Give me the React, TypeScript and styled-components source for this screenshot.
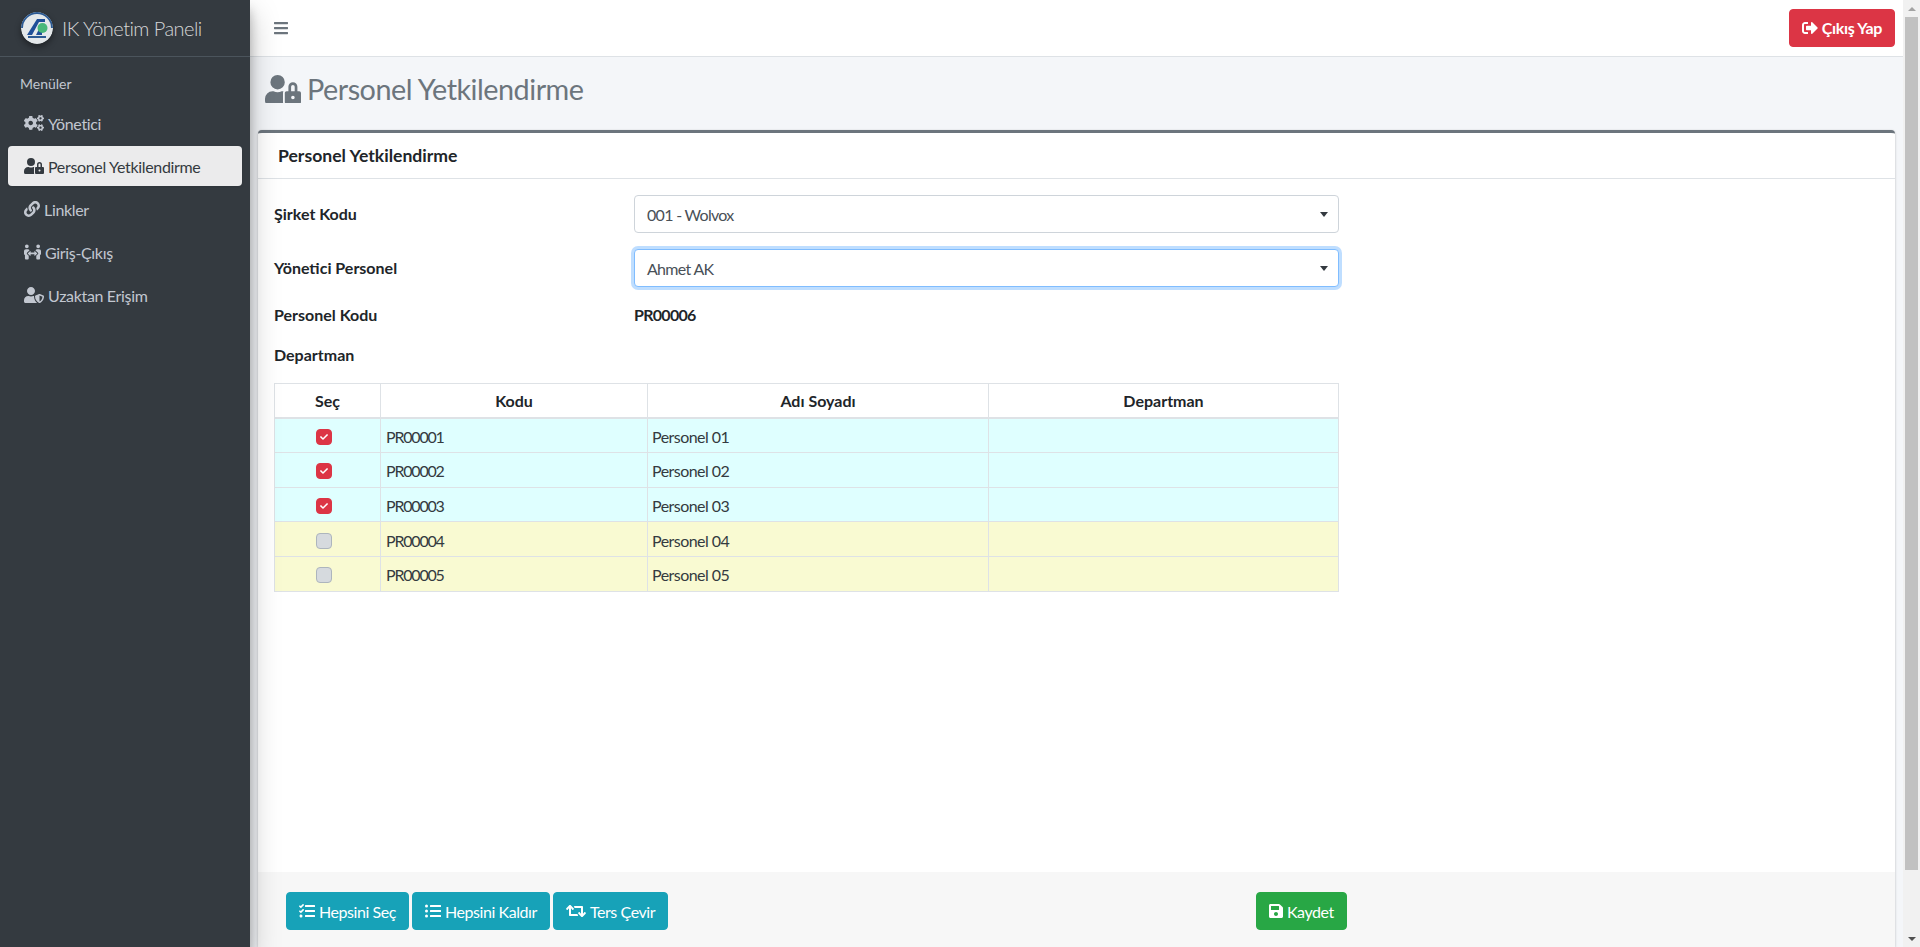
import React from 'react';
import styled, { createGlobalStyle } from 'styled-components';
import {
  FaBars,
  FaCheck,
  FaCogs,
  FaLink,
  FaListUl,
  FaPeopleArrows,
  FaRetweet,
  FaSave,
  FaSignOutAlt,
  FaTasks,
  FaUserLock,
  FaUserShield,
} from 'react-icons/fa';

const GlobalStyle = createGlobalStyle`
  html, body {
    margin: 0;
    height: 100%;
    overflow: hidden;
  }
  body {
    font-family: Lato, "Noto Sans", sans-serif;
    font-size: 16px;
    color: #212529;
  }
  * {
    box-sizing: border-box;
  }
`;

// react-icons renders every glyph in a 1em square, the FA viewBoxes are wider
const CogsIcon = styled(FaCogs)`
  width: 1.25em;
`;
const UserLockIcon = styled(FaUserLock)`
  width: 1.25em;
`;
const PeopleArrowsIcon = styled(FaPeopleArrows)`
  width: 1.0625em;
`;
const UserShieldIcon = styled(FaUserShield)`
  width: 1.25em;
`;
const RetweetIcon = styled(FaRetweet)`
  width: 1.25em;
`;
const SaveIcon = styled(FaSave)`
  width: 0.875em;
`;
const BarsIcon = styled(FaBars)`
  width: 0.875em;
`;

const Page = styled.div`
  width: 1920px;
  height: 947px;
  display: flex;
  overflow: hidden;
  background: #f4f6f9;
`;

const Sidebar = styled.aside`
  width: 250px;
  flex: none;
  background: #343a40;
  box-shadow: 0 14px 28px rgba(0, 0, 0, 0.25), 0 10px 10px rgba(0, 0, 0, 0.22);
  position: relative;
  z-index: 2;
`;

const Brand = styled.div`
  height: 57px;
  display: flex;
  align-items: center;
  gap: 9px;
  padding-left: 21px;
  border-bottom: 1px solid #4b545c;
  color: rgba(255, 255, 255, 0.8);
  font-size: 20px;
  font-weight: 300;
  letter-spacing: -0.55px;
`;

const LogoMark = styled.svg`
  width: 32px;
  height: 32px;
  border-radius: 50%;
  box-shadow: 0 3px 6px rgba(0, 0, 0, 0.4);
`;

const MenuHeader = styled.div`
  color: #c2c7d0;
  font-size: 14px;
  padding: 17px 0 0 20px;
  height: 44px;
  line-height: 16px;
  margin-top: 2px;
`;

const Menu = styled.nav`
  display: flex;
  flex-direction: column;
  gap: 3px;
  padding: 0 8px;
`;

const MenuItem = styled.a<{ $active?: boolean }>`
  height: 40px;
  display: flex;
  align-items: center;
  gap: 4px;
  padding-left: 16px;
  border-radius: 4px;
  font-size: 16px;
  letter-spacing: -0.33px;
  color: ${(p) => (p.$active ? '#343a40' : '#c2c7d0')};
  background: ${(p) => (p.$active ? 'rgba(255, 255, 255, 0.9)' : 'transparent')};
  box-shadow: ${(p) => (p.$active ? '0 1px 3px rgba(0, 0, 0, 0.12)' : 'none')};
  svg {
    flex: none;
  }
`;

const Main = styled.div`
  flex: 1;
  min-width: 0;
  display: flex;
  flex-direction: column;
`;

const Navbar = styled.header`
  height: 57px;
  flex: none;
  display: flex;
  align-items: center;
  justify-content: space-between;
  padding: 0 8px 1px 24px;
  background: #fff;
  border-bottom: 1px solid #dee2e6;
`;

const MenuToggle = styled.span`
  color: #6c757d;
  display: flex;
  font-size: 16px;
`;

const Button = styled.button<{ $color: string; $bold?: boolean }>`
  height: 38px;
  display: inline-flex;
  align-items: center;
  gap: 4px;
  padding: 0 12px;
  border: 1px solid ${(p) => p.$color};
  border-radius: 4px;
  background: ${(p) => p.$color};
  color: #fff;
  font-family: inherit;
  font-size: 16px;
  font-weight: ${(p) => (p.$bold ? 700 : 400)};
  letter-spacing: ${(p) => (p.$bold ? '-0.35px' : '-0.43px')};
  white-space: nowrap;
`;

const ContentHeader = styled.div`
  height: 73px;
  flex: none;
  display: flex;
  align-items: center;
  gap: 6px;
  padding: 0 0 9px 15px;
  color: #6c757d;
  font-size: 28.8px;
  font-weight: 400;
  line-height: 1;
  letter-spacing: -0.5px;
`;

const Card = styled.section`
  flex: 1;
  min-height: 0;
  margin: 0 8px;
  display: flex;
  flex-direction: column;
  background: #fff;
  border-top: 3px solid #6c757d;
  border-radius: 4px 4px 0 0;
  box-shadow: 0 0 1px rgba(0, 0, 0, 0.125), 0 1px 3px rgba(0, 0, 0, 0.2);
`;

const CardHeader = styled.div`
  height: 46px;
  flex: none;
  display: flex;
  align-items: center;
  padding-left: 20px;
  border-bottom: 1px solid #dee2e6;
  font-weight: 700;
  font-size: 17.6px;
`;

const CardBody = styled.div`
  flex: 1;
  padding: 16px;
`;

const FormGrid = styled.div`
  width: 1065px;
  display: grid;
  grid-template-columns: 360px 1fr;
  align-items: center;
  row-gap: 16px;
  margin-bottom: 16px;
  font-weight: 700;
`;

const Field = styled.label<{ $code?: boolean }>`
  font-size: 16px;
  line-height: 24px;
  letter-spacing: ${(p) => (p.$code ? '-0.7px' : 'normal')};
`;

const SelectBox = styled.div<{ $focused?: boolean }>`
  height: 38px;
  display: flex;
  align-items: center;
  justify-content: space-between;
  padding: 0 10px 0 12px;
  border: 1px solid ${(p) => (p.$focused ? '#80bdff' : '#ced4da')};
  border-radius: 4px;
  background: #fff;
  color: #495057;
  font-weight: 400;
  letter-spacing: -0.7px;
  box-shadow: ${(p) => (p.$focused ? '0 0 0 3px rgba(0, 123, 255, 0.25)' : 'none')};
  &::after {
    content: '';
    border-left: 4px solid transparent;
    border-right: 4px solid transparent;
    border-top: 5px solid #343a40;
  }
`;

const Grid = styled.table`
  width: 1064px;
  table-layout: fixed;
  border-collapse: collapse;
  th,
  td {
    border: 1px solid #dee2e6;
    height: 34.6px;
    padding: 1px 5px 0;
    line-height: 1;
  }
  th {
    text-align: center;
    font-weight: 700;
    background: #fff;
    border-bottom-width: 2px;
  }
`;

const Row = styled.tr<{ $selected: boolean }>`
  background: ${(p) => (p.$selected ? '#dfffff' : '#f9fad2')};
  color: #343a40;
`;

const CheckCell = styled.td`
  text-align: center;
`;

const CodeCell = styled.td`
  letter-spacing: -1.2px;
  && {
    padding-top: 3px;
  }
`;

const NameCell = styled.td`
  letter-spacing: -0.55px;
  && {
    padding: 3px 5px 0 4px;
  }
`;

const CheckMark = styled.span<{ $checked: boolean }>`
  display: inline-flex;
  align-items: center;
  justify-content: center;
  vertical-align: middle;
  width: 16px;
  height: 16px;
  margin-right: 7px;
  border-radius: 4px;
  border: 1px solid ${(p) => (p.$checked ? '#dc3545' : '#adb5bd')};
  background: ${(p) => (p.$checked ? '#dc3545' : '#d6dade')};
  color: #fff;
  font-size: 8px;
`;

const CardFooter = styled.div`
  height: 75px;
  flex: none;
  display: flex;
  align-items: flex-start;
  padding: 20px 28px 0;
  background: #f7f7f7;
`;

const ButtonGroup = styled.div`
  width: 970px;
  display: flex;
  gap: 3px;
`;

const Scrollbar = styled.div`
  width: 17px;
  flex: none;
  display: flex;
  flex-direction: column;
  align-items: center;
  background: #f1f1f1;
`;

const ScrollArrow = styled.div<{ $down?: boolean }>`
  height: 17px;
  flex: none;
  display: flex;
  align-items: center;
  &::after {
    content: '';
    border-left: 4px solid transparent;
    border-right: 4px solid transparent;
    ${(p) =>
      p.$down ? 'border-top: 4px solid #505050;' : 'border-bottom: 4px solid #a3a3a3;'}
  }
`;

const ScrollThumb = styled.div`
  width: 13px;
  height: 853px;
  background: #c1c1c1;
`;

const ScrollTrack = styled.div`
  flex: 1;
`;

const menuItems = [
  { label: 'Yönetici', icon: <CogsIcon /> },
  { label: 'Personel Yetkilendirme', icon: <UserLockIcon />, active: true },
  { label: 'Linkler', icon: <FaLink /> },
  { label: 'Giriş-Çıkış', icon: <PeopleArrowsIcon /> },
  { label: 'Uzaktan Erişim', icon: <UserShieldIcon /> },
];

const personnel = [
  { code: 'PR00001', name: 'Personel 01', selected: true },
  { code: 'PR00002', name: 'Personel 02', selected: true },
  { code: 'PR00003', name: 'Personel 03', selected: true },
  { code: 'PR00004', name: 'Personel 04', selected: false },
  { code: 'PR00005', name: 'Personel 05', selected: false },
];

const Logo = () => (
  <LogoMark viewBox="0 0 32 32">
    <circle cx="16" cy="16" r="16" fill="#e4e8ea" />
    <path d="M16 0a16 16 0 0 0-16 16h2A14 14 0 0 1 16 2a14 14 0 0 1 14 14h2A16 16 0 0 0 16 0z" fill="#2c5a93" />
    <path d="M6 23 L16 7 H24 V10 H18 L11 23 Z" fill="#1f4f98" />
    <path d="M15 23 L19 15 H21 V23 Z" fill="#1f4f98" />
    <circle cx="21.5" cy="16" r="5" fill="#49b87a" />
    <rect x="7" y="24" width="18" height="2" fill="#2c5a93" />
  </LogoMark>
);

export default function App() {
  return (
    <Page>
      <GlobalStyle />
      <Sidebar>
        <Brand>
          <Logo />
          IK Yönetim Paneli
        </Brand>
        <MenuHeader>Menüler</MenuHeader>
        <Menu>
          {menuItems.map((item) => (
            <MenuItem key={item.label} $active={item.active}>
              {item.icon}
              {item.label}
            </MenuItem>
          ))}
        </Menu>
      </Sidebar>
      <Main>
        <Navbar>
          <MenuToggle>
            <BarsIcon />
          </MenuToggle>
          <Button $color="#dc3545" $bold>
            <FaSignOutAlt />
            Çıkış Yap
          </Button>
        </Navbar>
        <ContentHeader>
          <UserLockIcon />
          Personel Yetkilendirme
        </ContentHeader>
        <Card>
          <CardHeader>Personel Yetkilendirme</CardHeader>
          <CardBody>
            <FormGrid>
              <Field>Şirket Kodu</Field>
              <SelectBox>001 - Wolvox</SelectBox>
              <Field>Yönetici Personel</Field>
              <SelectBox $focused>Ahmet AK</SelectBox>
              <Field>Personel Kodu</Field>
              <Field $code>PR00006</Field>
              <Field>Departman</Field>
              <span />
            </FormGrid>
            <Grid>
              <colgroup>
                <col width={106} />
                <col width={267} />
                <col width={341} />
                <col width={350} />
              </colgroup>
              <thead>
                <tr>
                  <th>Seç</th>
                  <th>Kodu</th>
                  <th>Adı Soyadı</th>
                  <th>Departman</th>
                </tr>
              </thead>
              <tbody>
                {personnel.map((p) => (
                  <Row key={p.code} $selected={p.selected}>
                    <CheckCell>
                      <CheckMark $checked={p.selected}>{p.selected && <FaCheck />}</CheckMark>
                    </CheckCell>
                    <CodeCell>{p.code}</CodeCell>
                    <NameCell>{p.name}</NameCell>
                    <td />
                  </Row>
                ))}
              </tbody>
            </Grid>
          </CardBody>
          <CardFooter>
            <ButtonGroup>
              <Button $color="#17a2b8">
                <FaTasks />
                Hepsini Seç
              </Button>
              <Button $color="#17a2b8">
                <FaListUl />
                Hepsini Kaldır
              </Button>
              <Button $color="#17a2b8">
                <RetweetIcon />
                Ters Çevir
              </Button>
            </ButtonGroup>
            <Button $color="#28a745">
              <SaveIcon />
              Kaydet
            </Button>
          </CardFooter>
        </Card>
      </Main>
      <Scrollbar>
        <ScrollArrow />
        <ScrollThumb />
        <ScrollTrack />
        <ScrollArrow $down />
      </Scrollbar>
    </Page>
  );
}
